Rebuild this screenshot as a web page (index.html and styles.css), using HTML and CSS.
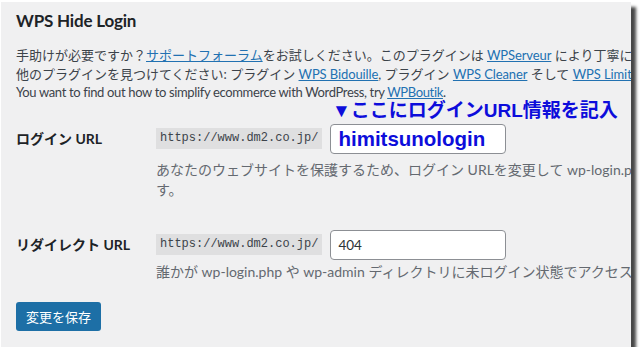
FILE: index.html
```html
<!DOCTYPE html>
<html lang="ja">
<head>
<meta charset="utf-8">
<title>WPS Hide Login</title>
<link rel="stylesheet" href="styles.css">
</head>
<body>
<div class="panel">
  <h1 class="title" lang="en">WPS Hide Login</h1>
  <div class="intro">
    <div class="line">手助けが必要ですか？<a href="#">サポートフォーラム</a>をお試しください。このプラグインは <a href="#" class="en-link" lang="en">WPServeur</a> により丁寧に作られています。</div>
    <div class="line">他のプラグインを見つけてください: プラグイン <a href="#" class="en-link" lang="en">WPS Bidouille</a>, プラグイン <a href="#" class="en-link" lang="en">WPS Cleaner</a> そして <a href="#" class="en-link" lang="en">WPS Limit Login</a></div>
    <div class="line en" lang="en">You want to find out how to simplify ecommerce with WordPress, try <a href="#">WPBoutik</a>.</div>
  </div>

  <div class="row row-first">
    <div class="label">ログイン URL</div>
    <div class="field">
      <div class="annot">▼ここにログインURL情報を記入</div>
      <div class="inputline">
        <code class="prefix">https://www.dm2.co.jp/</code>
        <span class="input input-big">himitsunologin</span>
      </div>
      <div class="desc">
        <div class="line">あなたのウェブサイトを保護するため、ログイン URLを変更して wp-login.php ページと wp-admin ディレクトリへのアクセスを防ぐことができま</div>
        <div class="line">す。</div>
      </div>
    </div>
  </div>

  <div class="row row-second">
    <div class="label">リダイレクト URL</div>
    <div class="field">
      <div class="inputline">
        <code class="prefix">https://www.dm2.co.jp/</code>
        <span class="input">404</span>
      </div>
      <div class="desc desc-tight">
        <div class="line">誰かが wp-login.php や wp-admin ディレクトリに未ログイン状態でアクセスした場合、リダイレクトされるページです。</div>
      </div>
    </div>
  </div>

  <button class="save">変更を保存</button>
</div>
</body>
</html>
```

FILE: styles.css
```css
html, body {
  margin: 0;
  padding: 0;
  background: #ffffff;
}

body {
  font-family: Lato, "Noto Sans CJK JP", sans-serif;
  color: #3c434a;
  font-size: 13px;
}

.panel {
  margin: 2px 0 0 1px;
  width: 630px;
  height: 345px;
  box-sizing: border-box;
  padding: 7px 0 0 15px;
  background: #f0f0f1;
  overflow: hidden;
  box-shadow: 5px 5px 3px rgba(0, 0, 0, 0.72);
  position: relative;
}

.line {
  white-space: nowrap;
}

.en {
  letter-spacing: -0.35px;
}

.en-link {
  letter-spacing: -0.1px;
}

.title {
  margin: 0;
  font-size: 17px;
  line-height: 24px;
  font-weight: 700;
  letter-spacing: -0.2px;
  color: #1d2327;
}

.intro {
  margin-top: 13px;
  font-size: 13px;
}

.intro .line {
  height: 18.5px;
  line-height: 18.5px;
}

a {
  color: #2271b1;
  text-decoration: underline;
}

.row {
  display: flex;
}

.row-first {
  margin-top: 22px;
}

.row-second {
  margin-top: 30px;
}

.label {
  width: 140px;
  flex: none;
  font-size: 14px;
  font-weight: 700;
  color: #1d2327;
  line-height: 30px;
  height: 30px;
}

.field {
  position: relative;
  flex: none;
}

.annot {
  position: absolute;
  left: 176px;
  top: -25px;
  white-space: nowrap;
  font-family: "Liberation Sans", "Noto Sans CJK JP", sans-serif;
  font-weight: 700;
  font-size: 19px;
  line-height: 24px;
  color: #0d0ddb;
}

.inputline {
  display: flex;
  align-items: center;
  gap: 8px;
  height: 30px;
}

.prefix {
  font-family: "Liberation Mono", monospace;
  font-size: 12px;
  line-height: 21px;
  padding: 0 4px;
  background: #dfdfe0;
  color: #3c434a;
}

.input {
  box-sizing: border-box;
  width: 176px;
  height: 30px;
  border: 1px solid #8c8f94;
  border-radius: 4px;
  background: #ffffff;
  padding: 0 7px;
  font-size: 13.5px;
  line-height: 28px;
  color: #2c3338;
}

.input-big {
  font-family: "Liberation Sans", sans-serif;
  font-weight: 700;
  font-size: 20.5px;
  color: #0d0ddb;
}

.desc {
  margin-top: 6px;
  font-size: 14px;
  color: #646970;
}

.desc-tight {
  margin-top: 2px;
}

.desc .line {
  height: 20px;
  line-height: 20px;
}

.save {
  display: block;
  margin-top: 20px;
  width: 85px;
  height: 29px;
  border: 0;
  border-radius: 3px;
  background: #1d6fa6;
  color: #ffffff;
  font-family: Lato, "Noto Sans CJK JP", sans-serif;
  font-size: 13px;
  padding: 0;
}
```
